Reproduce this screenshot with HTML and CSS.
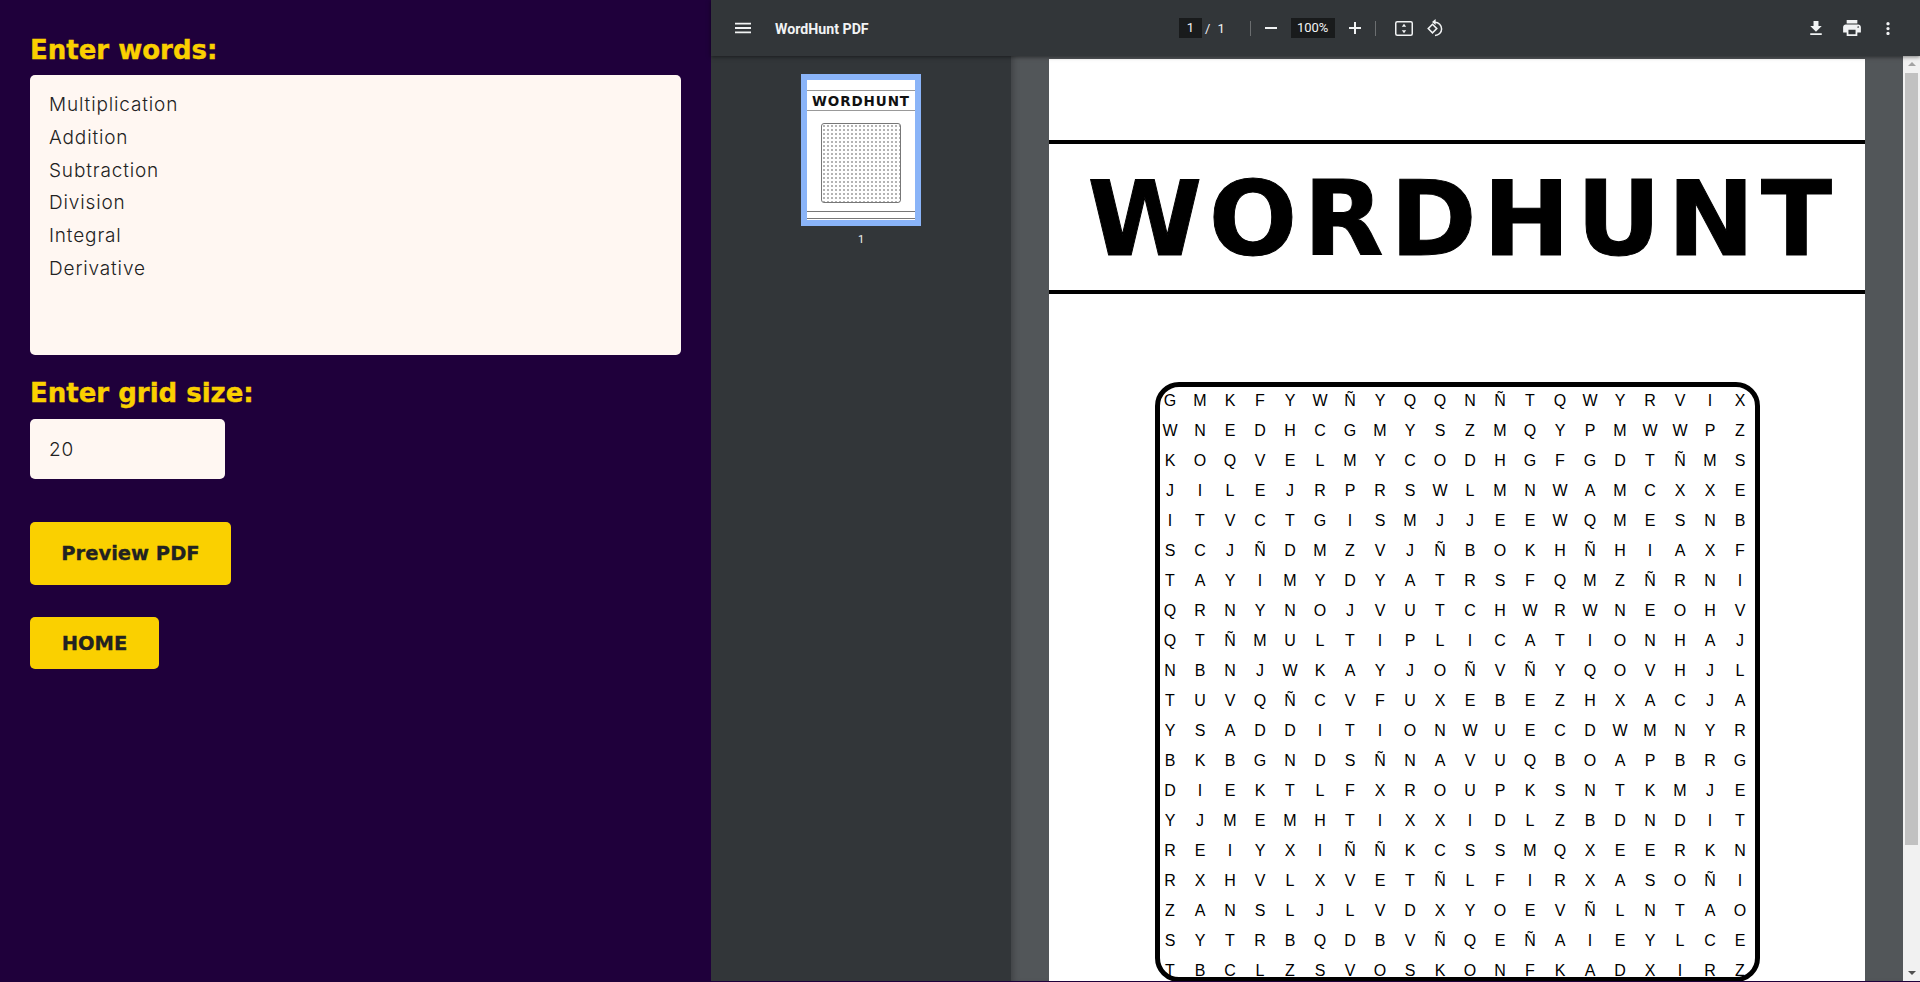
FILE: index.html
```html
<!DOCTYPE html>
<html>
  <head>
    <title>WordHunt</title>
    <link rel="stylesheet" href="styles.css">
  </head>
  <body>
    <div class="form_pane">
      <h2>Enter words:</h2>
      <textarea class="words" spellcheck="false">Multiplication
Addition
Subtraction
Division
Integral
Derivative</textarea>
      <h2 class="second">Enter grid size:</h2>
      <input class="size" type="text" value="20">
      <button class="btn preview">Preview PDF</button>
      <button class="btn home">HOME</button>
    </div>

    <div class="pdf_pane">
      <div class="toolbar">
        <div class="tb_left">
          <svg class="ic_menu" viewBox="3 6 18 12"><path d="M3 18h18v-2H3v2zm0-5h18v-2H3v2zm0-7v2h18V6H3z"/></svg>
          <span class="doc_title">WordHunt PDF</span>
        </div>
        <div class="tb_center">
          <span class="num_box page_box">1</span>
          <span class="slash">/</span>
          <span class="total">1</span>
          <span class="sep sep1"></span>
          <svg class="ic_zoom minus" viewBox="0 0 12 12"><path d="M0 5h12v2H0z"/></svg>
          <span class="num_box zoom_box">100%</span>
          <svg class="ic_zoom plus" viewBox="0 0 12 12"><path d="M0 5h5V0h2v5h5v2H7v5H5V7H0z"/></svg>
          <span class="sep sep2"></span>
          <svg class="ic_fit" viewBox="0 0 18 15"><rect x="0.75" y="0.75" width="16.5" height="13.5" rx="1.5"/><path class="solid" d="M9 2.8l2.2 3H6.8zM9 12.2l-2.2-3h4.4z"/></svg>
          <svg class="ic_rotate" viewBox="0 0 18 18"><path d="M1.2 9.6l4.3-4.3 4.3 4.3-4.3 4.3z"/><path d="M8 3.3a6.6 6.6 0 1 1 0 13.2"/><path class="solid" d="M8.6 0v6L5 3z"/></svg>
        </div>
        <div class="tb_right">
          <svg class="ic_down" viewBox="5 3 14 17"><path d="M19 9h-4V3H9v6H5l7 7 7-7zM5 18v2h14v-2H5z"/></svg>
          <svg class="ic_print" viewBox="2 3 20 18"><path d="M19 8H5c-1.66 0-3 1.34-3 3v6h4v4h12v-4h4v-6c0-1.66-1.34-3-3-3zm-3 11H8v-5h8v5zm3-7c-.55 0-1-.45-1-1s.45-1 1-1 1 .45 1 1-.45 1-1 1zm-1-9H6v4h12V3z"/></svg>
          <svg class="ic_more" viewBox="10 4 4 16"><path d="M12 8c1.1 0 2-.9 2-2s-.9-2-2-2-2 .9-2 2 .9 2 2 2zm0 2c-1.1 0-2 .9-2 2s.9 2 2 2 2-.9 2-2-.9-2-2-2zm0 6c-1.1 0-2 .9-2 2s.9 2 2 2 2-.9 2-2-.9-2-2-2z"/></svg>
        </div>
      </div>

      <div class="pdf_main">
        <div class="sidebar">
          <div class="thumb">
            <div class="thumb_title">WORDHUNT</div>
            <div class="thumb_grid"></div>
            <div class="thumb_foot"></div>
          </div>
          <div class="thumb_num">1</div>
        </div>

        <div class="viewer">
          <div class="page">
            <div class="page_title">WORDHUNT</div>
            <div class="grid_box">
              <div class="grid" id="grid"></div>
            </div>
          </div>
        </div>

        <div class="scrollbar">
          <span class="arrow up"></span>
          <span class="thumb_bar"></span>
          <span class="arrow down"></span>
        </div>
      </div>
    </div>

    <script type="text/javascript">
      var rows = [
        "GMKFYWÑYQQNÑTQWYRVIX",
        "WNEDHCGMYSZMQYPMWWPZ",
        "KOQVELMYCODHGFGDTÑMS",
        "JILEJRPRSWLMNWAMCXXE",
        "ITVCTGISMJJEEWQMESNB",
        "SCJÑDMZVJÑBOKHÑHIAXF",
        "TAYIMYDYATRSFQMZÑRNI",
        "QRNYNOJVUTCHWRWNEOHV",
        "QTÑMULTIPLICATIONHAJ",
        "NBNJWKAYJOÑVÑYQOVHJL",
        "TUVQÑCVFUXEBEZHXACJA",
        "YSADDITIONWUECDWMNYR",
        "BKBGNDSÑNAVUQBOAPBRG",
        "DIEKTLFXROUPKSNTKMJE",
        "YJMEMHTIXXIDLZBDNDIT",
        "REIYXIÑÑKCSSMQXEERKN",
        "RXHVLXVETÑLFIRXASOÑI",
        "ZANSLJLVDXYOEVÑLNTAO",
        "SYTRBQDBVÑQEÑAIEYLCE",
        "TBCLZSVOSKONFKADXIRZ"
      ];
      var grid = document.getElementById("grid");
      for (var i = 0; i < rows.length; i++) {
        for (var j = 0; j < rows[i].length; j++) {
          var cell = document.createElement("span");
          cell.textContent = rows[i].charAt(j);
          grid.appendChild(cell);
        }
      }
    </script>
  </body>
</html>
```

FILE: styles.css
```css
html, body {
    margin: 0;
    height: 982px;
    overflow: hidden;
}

body {
    display: flex;
    background: #1f003b;
    font-family: "Inter", "Liberation Sans", sans-serif;
}

/* left form */
.form_pane {
    flex: 0 0 711px;
    box-sizing: border-box;
    padding: 33px 30px 0 30px;
    display: flex;
    flex-direction: column;
    align-items: flex-start;
}

h2 {
    margin: 0 0 8px 0;
    font-family: "DejaVu Sans", sans-serif;
    font-size: 26px;
    line-height: 34px;
    font-weight: 700;
    color: #fad000;
    -webkit-text-stroke: 0.4px #fad000;
}

h2.second {
    margin: 21px 0 9px 0;
}

.words, .size {
    display: block;
    box-sizing: border-box;
    border: 0;
    border-radius: 5px;
    outline: none;
    background: #fff7f2;
    color: #222;
    font-family: "Inter", "Liberation Sans", sans-serif;
    font-size: 19px;
    font-weight: 300;
    letter-spacing: 0.85px;
}

.words {
    width: 651px;
    height: 280px;
    padding: 14px 19px;
    line-height: 32.8px;
    resize: none;
    overflow: hidden;
}

.size {
    width: 195px;
    height: 60px;
    padding: 0 19px;
}

.btn {
    display: block;
    box-sizing: border-box;
    border: 0;
    border-radius: 5px;
    padding: 0;
    background: #fad000;
    color: #222;
    font-family: "DejaVu Sans", sans-serif;
    font-size: 19.5px;
    font-weight: 700;
    -webkit-text-stroke: 0.3px #222;
}

.preview {
    width: 201px;
    height: 63px;
    margin-top: 43px;
}

.home {
    width: 129px;
    height: 52px;
    margin-top: 32px;
}

/* pdf viewer */
.pdf_pane {
    flex: 1;
    height: 981px;
    display: flex;
    flex-direction: column;
    min-width: 0;
    font-family: "Roboto", "Liberation Sans", sans-serif;
}

.toolbar {
    flex: 0 0 56px;
    display: flex;
    align-items: center;
    background: #323639;
    color: #f1f3f4;
    font-size: 13px;
    box-shadow: 0 1px 4px rgba(0, 0, 0, 0.5);
    position: relative;
    z-index: 2;
}

.toolbar svg {
    display: block;
    fill: #f1f3f4;
    flex: none;
}

.tb_left {
    flex: 0 0 468px;
    display: flex;
    align-items: center;
    box-sizing: border-box;
    padding-left: 24px;
}

.ic_menu {
    width: 16px;
    height: 12px;
}

.doc_title {
    margin: 2px 0 0 24px;
    font-weight: 700;
    font-size: 14.2px;
}

.tb_center {
    display: flex;
    align-items: center;
}

.num_box {
    height: 20px;
    line-height: 20px;
    background: #191b1c;
    text-align: center;
}

.page_box {
    width: 23px;
}

.slash {
    margin-left: 3px;
}

.total {
    margin-left: 7px;
}

.sep {
    width: 1px;
    height: 15px;
    background: #6b6e70;
}

.sep1 {
    margin-left: 25px;
}

.ic_zoom {
    width: 12px;
    height: 12px;
}

.minus {
    margin-left: 14px;
}

.zoom_box {
    width: 44px;
    margin-left: 14px;
}

.plus {
    margin-left: 14px;
}

.sep2 {
    margin-left: 14px;
}

.toolbar .ic_fit {
    width: 18px;
    height: 15px;
    margin-left: 19px;
    fill: none;
    stroke: #f1f3f4;
    stroke-width: 1.5;
}

.toolbar .ic_rotate {
    width: 18px;
    height: 18px;
    margin-left: 14px;
    fill: none;
    stroke: #f1f3f4;
    stroke-width: 1.5;
}

.toolbar svg .solid {
    fill: #f1f3f4;
    stroke: none;
}

.tb_right {
    margin-left: auto;
    display: flex;
    align-items: center;
    padding-right: 30px;
}

.ic_down {
    width: 12px;
    height: 14px;
}

.ic_print {
    width: 18px;
    height: 16px;
    margin-left: 21px;
}

.ic_more {
    width: 4px;
    height: 13px;
    margin-left: 25px;
}

.pdf_main {
    flex: 1;
    display: flex;
    min-height: 0;
}

.sidebar {
    flex: 0 0 300px;
    background: #323639;
    padding-top: 18px;
    display: flex;
    flex-direction: column;
    align-items: center;
}

.thumb {
    width: 108px;
    height: 140px;
    box-sizing: content-box;
    border: 6px solid #8ab4f8;
    background: #fff;
    display: flex;
    flex-direction: column;
    align-items: center;
}

.thumb_title {
    align-self: stretch;
    box-sizing: border-box;
    margin-top: 10px;
    height: 21px;
    border-top: 1px solid #999;
    border-bottom: 1px solid #999;
    text-align: center;
    color: #111;
    font-family: "DejaVu Sans", sans-serif;
    font-weight: 700;
    font-size: 13.5px;
    line-height: 20px;
    letter-spacing: 0.9px;
    white-space: nowrap;
}

.thumb_grid {
    width: 80px;
    height: 80px;
    box-sizing: border-box;
    margin-top: 12px;
    border: 1px solid #777;
    border-radius: 3px;
    background-image: radial-gradient(circle, #b4b4b4 0.9px, transparent 1.5px);
    background-size: 4px 4px;
}

.thumb_foot {
    align-self: stretch;
    height: 6px;
    margin-top: 8px;
    border-top: 1px solid #777;
    border-bottom: 1px solid #777;
}

.thumb_num {
    margin-top: 7px;
    color: #f1f3f4;
    font-size: 11px;
    line-height: 13px;
}

.viewer {
    flex: 1;
    min-width: 0;
    background: #525659;
    overflow: hidden;
    display: flex;
    justify-content: center;
    padding-top: 3px;
    box-shadow: inset 6px 0 6px -4px rgba(0, 0, 0, 0.25);
}

.page {
    flex: 0 0 816px;
    height: 1056px;
    background: #fff;
    padding-top: 81px;
    box-sizing: border-box;
}

.page_title {
    box-sizing: border-box;
    height: 154px;
    padding-left: 12px;
    border-top: 4px solid #000;
    border-bottom: 4px solid #000;
    color: #000;
    text-align: center;
    font-family: "DejaVu Sans", sans-serif;
    font-weight: 700;
    font-size: 104px;
    line-height: 150px;
    letter-spacing: 6.5px;
    white-space: nowrap;
    -webkit-text-stroke: 1px #000;
}

.grid_box {
    box-sizing: border-box;
    width: 605px;
    height: 600px;
    margin: 88px 0 0 106px;
    border: 5px solid #000;
    border-radius: 24px;
}

.grid {
    display: grid;
    grid-template-columns: repeat(20, 30px);
    grid-auto-rows: 30px;
    margin: -1px 0 0 -5px;
    color: #000;
    font-family: "Liberation Sans", sans-serif;
    font-size: 16px;
    line-height: 30px;
    text-align: center;
}

.scrollbar {
    flex: 0 0 17px;
    background: #f1f1f1;
    display: flex;
    flex-direction: column;
    align-items: center;
    justify-content: space-between;
}

.arrow {
    width: 0;
    height: 0;
    border-left: 4px solid transparent;
    border-right: 4px solid transparent;
}

.up {
    margin-top: 6px;
    border-bottom: 4px solid #a3a3a3;
}

.down {
    margin-bottom: 6px;
    border-top: 4px solid #505050;
}

.thumb_bar {
    width: 13px;
    height: 772px;
    margin-bottom: 120px;
    background: #c1c1c1;
}
```
